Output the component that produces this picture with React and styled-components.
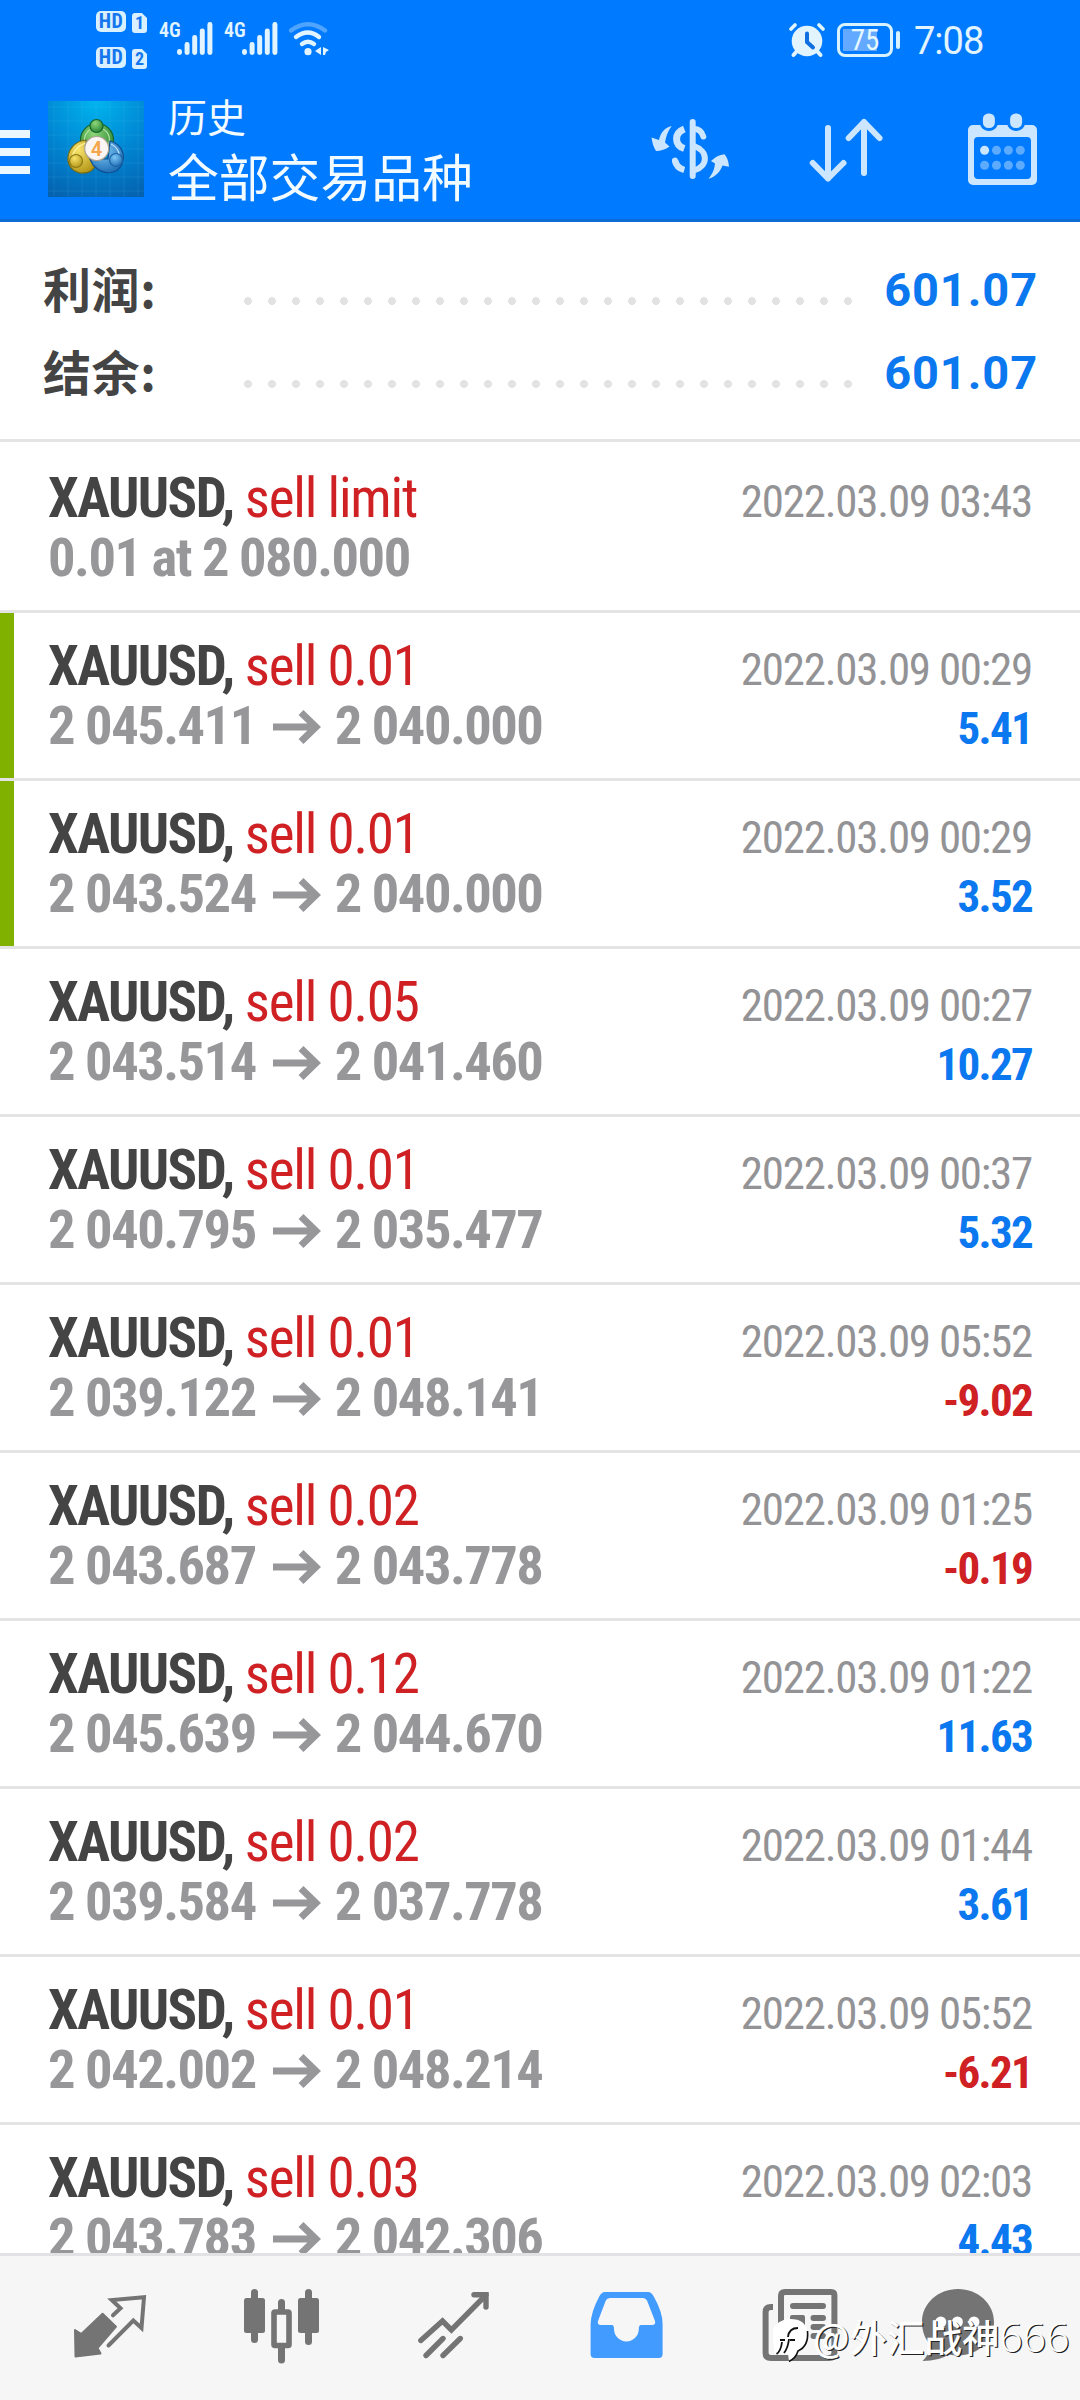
import React from "react";
import styled, { createGlobalStyle } from "styled-components";

const GlobalStyle = createGlobalStyle`
  * {
    box-sizing: border-box;
  }
  body {
    margin: 0;
    background: #fff;
    font-family: "Roboto Condensed", Roboto, "Noto Sans CJK SC", sans-serif;
  }
`;

const Screen = styled.div`
  display: flex;
  flex-direction: column;
  position: relative;
  width: 1080px;
  height: 2400px;
  overflow: hidden;
  background: #fff;
`;

const StatusBar = styled.div`
  display: flex;
  justify-content: space-between;
  height: 82px;
  padding: 11px 96px 0 96px;
  background: #007aff;
  color: #e2f4ff;
`;

const StatusGroup = styled.div`
  display: flex;
  align-items: flex-start;
  padding-top: ${(p) => p.$top || 0}px;
`;

const SimList = styled.div`
  display: flex;
  flex-direction: column;
  gap: 15px;
  margin-right: 12px;
`;

const Sim = styled.div`
  display: flex;
  gap: 6px;
  height: 21px;
  color: #1576ee;
  font-weight: 700;
  line-height: 21px;
  text-align: center;
`;

const HdBadge = styled.span`
  width: 30px;
  border-radius: 5px;
  background: #d8f0ff;
  font-size: 20px;
  letter-spacing: 0.5px;
`;

const SimBadge = styled.span`
  width: 15px;
  height: 20px;
  margin-top: 2px;
  border-radius: 3px;
  background: #d8f0ff;
  clip-path: polygon(0 0, 66% 0, 100% 25%, 100% 100%, 0 100%);
  font-size: 18px;
  line-height: 20px;
`;

const Network = styled.span`
  width: 18px;
  margin-top: 10px;
  font-size: 20px;
  font-weight: 600;
  line-height: 18px;
`;

const SignalIcon = styled.svg`
  width: 36px;
  height: 34px;
  margin: 11px 11px 0 0;
`;

const WifiIcon = styled.svg`
  width: 42px;
  height: 34px;
  margin-top: 11px;
`;

const AlarmIcon = styled.svg`
  width: 36px;
  height: 36px;
  margin-right: 12px;
`;

const Battery = styled.div`
  width: 56px;
  height: 34px;
  margin-top: 1px;
  padding: 4px;
  border: 3px solid #d8f3ff;
  border-radius: 8px;
  background: linear-gradient(#62a9ff, #62a9ff) 3px 3px / 34px 22px no-repeat;
  color: #e6f8ff;
  font-size: 29px;
  line-height: 20px;
  text-align: center;
`;

const BatteryTip = styled.div`
  width: 4px;
  height: 18px;
  margin: 9px 14px 0 3px;
  border-radius: 2px;
  background: #d8f3ff;
`;

const Clock = styled.div`
  width: 70px;
  font-family: Roboto, sans-serif;
  font-size: 38px;
  letter-spacing: -1px;
  line-height: 38px;
  white-space: nowrap;
`;

const AppBar = styled.header`
  display: flex;
  align-items: center;
  height: 140px;
  padding: 0 36px 4px 0;
  border-bottom: 3px solid #0f6bd6;
  background: #007aff;
`;

const MenuButton = styled.div`
  display: flex;
  flex-direction: column;
  gap: 10px;
  width: 30px;
  margin: 6px 18px 0 0;

  span {
    height: 8px;
    background: #ebf7ff;
  }
`;

const LogoIcon = styled.svg`
  width: 96px;
  height: 96px;
`;

const Titles = styled.div`
  flex: 1;
  margin: -4px 0 0 24px;
  color: #f2fbff;
  font-family: "Noto Sans CJK SC", sans-serif;
`;

const Title = styled.div`
  font-size: 39px;
  line-height: 57px;
`;

const Subtitle = styled.div`
  font-size: 50.8px;
  line-height: 62px;
`;

const Actions = styled.div`
  display: flex;
  gap: 72px;
`;

const ActionIcon = styled.svg`
  width: 84px;
  height: 80px;
  color: #cde6ff;
`;

const Summary = styled.section`
  height: 220px;
  padding: 27px 42px 0 43px;
  border-bottom: 3px solid #e4e4e4;
`;

const SummaryRow = styled.div`
  display: flex;
  align-items: center;
  height: 83px;
`;

const SummaryLabel = styled.span`
  width: 193px;
  margin-top: -8px;
  color: #444;
  font-family: "Noto Sans CJK SC", sans-serif;
  font-size: 48px;
  font-weight: 700;
  letter-spacing: 0.6px;
`;

const Leader = styled.span`
  width: 624px;
  height: 8px;
  margin-top: 20px;
  background: radial-gradient(circle at center, #e2e2e2 3.6px, transparent 4.2px)
    0 0 / 24px 8px repeat-x;
`;

const SummaryValue = styled.span`
  flex: 1;
  margin-top: -3px;
  color: #0b78f0;
  font-family: Roboto, sans-serif;
  font-size: 47px;
  font-weight: 700;
  letter-spacing: 0.9px;
  text-align: right;
`;

const List = styled.main`
  flex: 1;
  min-height: 0;
  padding-top: 3px;
  overflow: hidden;
`;

const Row = styled.div`
  display: flex;
  height: 168px;
  border-bottom: 3px solid #e4e4e4;
`;

const Marker = styled.div`
  width: 14px;
  background: ${(p) => (p.$active ? "#80b000" : "transparent")};
`;

const RowBody = styled.div`
  flex: 1;
  padding: 24px 48px 0 34px;
`;

const Line = styled.div`
  display: flex;
  align-items: baseline;
  justify-content: space-between;
  height: 59px;
  line-height: 59px;
  white-space: nowrap;
`;

const Symbol = styled.span`
  color: #444;
  font-size: 55px;
  font-weight: 700;
  letter-spacing: -1.6px;
`;

const Order = styled.span`
  color: #cf2024;
  font-size: 55px;
  letter-spacing: -1.2px;
`;

const Price = styled.span`
  color: #97979a;
  font-size: 54.5px;
  font-weight: 700;
  letter-spacing: -1.5px;
`;

const ArrowIcon = styled.svg`
  width: 48px;
  height: 34px;
  margin: 0 14px 0 17px;
`;

const Date = styled.span`
  color: #939396;
  font-size: 45px;
  letter-spacing: -1.25px;
`;

const Profit = styled.span`
  color: ${(p) => (p.$loss ? "#cf2024" : "#0b78f0")};
  font-size: 45px;
  font-weight: 700;
  letter-spacing: -1.7px;
`;

const NavBar = styled.nav`
  display: flex;
  height: 147px;
  padding: 24px 0 0 60px;
  border-top: 3px solid #e2e2e4;
  background: #f6f6f6;
  color: #747474;
`;

const NavIcon = styled.svg`
  width: 100px;
  height: 100px;
  margin-right: 72px;
  flex: none;
  color: ${(p) => (p.$active ? "#429bff" : "inherit")};
`;

const Watermark = styled.div`
  display: flex;
  align-items: center;
  position: absolute;
  left: 772px;
  top: 2309px;
  height: 54px;
  color: #fff;
  font-family: "Noto Sans CJK SC", sans-serif;
  font-size: 37.5px;
  font-weight: 500;
  line-height: 54px;
  text-shadow: 1.2px 1.2px 0.5px #222;
  white-space: nowrap;

  svg {
    width: 40px;
    height: 46px;
    margin: 9px 1px 0 0;
  }
`;

const WatermarkDigits = styled.span`
  font-family: "Open Sans", sans-serif;
  font-size: 41px;
  font-weight: 300;
`;

const trades = [
  { order: "sell limit", at: "0.01 at 2 080.000", date: "2022.03.09 03:43" },
  { order: "sell 0.01", from: "2 045.411", to: "2 040.000", date: "2022.03.09 00:29", profit: "5.41", marked: true },
  { order: "sell 0.01", from: "2 043.524", to: "2 040.000", date: "2022.03.09 00:29", profit: "3.52", marked: true },
  { order: "sell 0.05", from: "2 043.514", to: "2 041.460", date: "2022.03.09 00:27", profit: "10.27" },
  { order: "sell 0.01", from: "2 040.795", to: "2 035.477", date: "2022.03.09 00:37", profit: "5.32" },
  { order: "sell 0.01", from: "2 039.122", to: "2 048.141", date: "2022.03.09 05:52", profit: "-9.02" },
  { order: "sell 0.02", from: "2 043.687", to: "2 043.778", date: "2022.03.09 01:25", profit: "-0.19" },
  { order: "sell 0.12", from: "2 045.639", to: "2 044.670", date: "2022.03.09 01:22", profit: "11.63" },
  { order: "sell 0.02", from: "2 039.584", to: "2 037.778", date: "2022.03.09 01:44", profit: "3.61" },
  { order: "sell 0.01", from: "2 042.002", to: "2 048.214", date: "2022.03.09 05:52", profit: "-6.21" },
  { order: "sell 0.03", from: "2 043.783", to: "2 042.306", date: "2022.03.09 02:03", profit: "4.43" },
];

function Signal() {
  return (
    <>
      <Network>4G</Network>
      <SignalIcon viewBox="0 0 36 34" fill="currentColor">
        {[27, 20, 13, 6.5, 0].map((y, i) => (
          <rect key={y} x={i * 7.6} y={y} width="5" height={33 - y} rx="2.4" />
        ))}
      </SignalIcon>
    </>
  );
}

function Wifi() {
  return (
    <WifiIcon viewBox="0 0 42 34" fill="none" stroke="currentColor" strokeWidth="4.4" strokeLinecap="round">
      <path d="M2 8.5 Q19 -4 36 8.5" opacity="0.35" />
      <path d="M7 15 Q19 6 30 15" />
      <path d="M13 22 Q19 17.5 25 22" />
      <circle cx="19" cy="29.7" r="3.6" fill="currentColor" stroke="none" />
      <path d="M32 25 V33 L26 29 Z M34 25 L40 28 L37 30 L36 33 H34 Z" fill="currentColor" stroke="none" />
    </WifiIcon>
  );
}

function Alarm() {
  return (
    <AlarmIcon viewBox="0 0 36 36" fill="none" stroke="currentColor" strokeLinecap="round">
      <circle cx="18" cy="19" r="15.3" fill="currentColor" stroke="none" />
      <path d="M2 7 L6 3 M34 7 L30 3" strokeWidth="3.6" />
      <path d="M8 29 L4.5 33 M28 29 L31.5 33" strokeWidth="4" />
      <path d="M18 11.5 V20 L24 25.5" stroke="#0f6fe0" strokeWidth="4" />
    </AlarmIcon>
  );
}

function Logo() {
  const lines = [6, 20, 34, 48, 62, 76, 90];
  return (
    <LogoIcon viewBox="0 0 96 96">
      <defs>
        <radialGradient id="sky" cx="0.5" cy="0" r="1.1">
          <stop offset="0" stopColor="#00b4ee" />
          <stop offset="0.5" stopColor="#0088d4" />
          <stop offset="1" stopColor="#0560ae" />
        </radialGradient>
        <radialGradient id="green" cx="0.4" cy="0.3" r="0.8">
          <stop offset="0" stopColor="#8fd67a" />
          <stop offset="1" stopColor="#1d7d2c" />
        </radialGradient>
        <radialGradient id="gold" cx="0.4" cy="0.3" r="0.8">
          <stop offset="0" stopColor="#f8e36a" />
          <stop offset="1" stopColor="#ad8f10" />
        </radialGradient>
        <radialGradient id="blue" cx="0.4" cy="0.3" r="0.8">
          <stop offset="0" stopColor="#7cc6f5" />
          <stop offset="1" stopColor="#1565ae" />
        </radialGradient>
      </defs>
      <rect width="96" height="96" fill="url(#sky)" />
      <g stroke="#5cc4f4" strokeOpacity="0.14">
        {lines.map((n) => (
          <path key={n} d={`M${n} 0 V96 M0 ${n} H96`} />
        ))}
      </g>
      <g strokeWidth="1.2">
        <circle cx="49" cy="39" r="16.5" fill="url(#green)" stroke="#15652c" />
        <circle cx="49" cy="39" r="12.5" fill="none" stroke="#b4e3a4" />
        <path d="M38 39 C26 40 19 50 20 60 C22 71 34 75 43 70 L47 66 L38 52 Z" fill="url(#gold)" stroke="#6e6a18" />
        <path d="M38 42 C29 45 24 52 24 58" fill="none" stroke="#fff5a0" />
        <path d="M62 40 C73 43 78 53 74 63 C69 74 55 75 45 64 L42 58 L60 58 Z" fill="url(#blue)" stroke="#0f4f92" />
        <path d="M63 43 C71 47 73 55 70 61" fill="none" stroke="#c1e6ff" />
        <circle cx="48.5" cy="25" r="6.5" fill="url(#green)" stroke="#15652c" />
        <circle cx="28" cy="60" r="6.5" fill="url(#gold)" stroke="#8c7a14" />
        <circle cx="68" cy="59" r="6.5" fill="url(#blue)" stroke="#1d63a6" />
        <circle cx="48.7" cy="47.5" r="12" fill="#fbf6f3" stroke="#a9a294" />
      </g>
      <text x="48.5" y="54.5" textAnchor="middle" fontFamily="Roboto, sans-serif" fontSize="20" fontWeight="600" fill="#f5a54a">
        4
      </text>
    </LogoIcon>
  );
}

function CurrencyIcon() {
  return (
    <ActionIcon viewBox="0 0 84 80" fill="none" stroke="currentColor" strokeWidth="6">
      <path d="M44.7 13 V67" strokeLinecap="round" />
      <path d="M36.3 20 C26 24 26 36 36.3 39.5" strokeWidth="7" />
      <path d="M27 51.5 C28 56.5 31 59.5 36.3 61" strokeWidth="6.4" />
      <path d="M27 51.5 L27.3 52.5" strokeLinecap="round" />
      <path d="M46 20 C51 20 54 23 55.3 27.5" strokeLinecap="round" />
      <path d="M46 37 C60.5 42 60.5 57 46 61.5" />
      <path
        d="M23.7 17 C17 18.7 12.7 23 11 31 L3.5 28.5 Q4.5 36.5 8 42 Q15.5 42 21.5 37.6 L17 33.5 C18 27 20 22 23.7 17 Z"
        fill="currentColor"
        stroke="none"
      />
      <path
        d="M60.5 69.7 C66 63 66.5 58.5 67 54.5 L63 52 Q69 46 76.5 45.2 Q80.5 50 81 57.7 L74.5 56.5 C72 63.5 67 68 60.5 69.7 Z"
        fill="currentColor"
        stroke="none"
      />
    </ActionIcon>
  );
}

function SortIcon() {
  return (
    <ActionIcon viewBox="0 0 84 80" fill="none" stroke="currentColor" strokeWidth="6" strokeLinecap="round" strokeLinejoin="round">
      <path d="M24 19 V69.5 M8.8 54 L24 69.5 L39.5 54" />
      <path d="M60 64 V13 M44.7 29 L60 13 L75.5 29" />
    </ActionIcon>
  );
}

function CalendarIcon() {
  return (
    <ActionIcon viewBox="0 0 84 80" fill="currentColor">
      <path
        fillRule="evenodd"
        d="M13 16 H72 a5 5 0 0 1 5 5 V71 a5 5 0 0 1 -5 5 H13 a5 5 0 0 1 -5 -5 V21 a5 5 0 0 1 5 -5 Z M18 28 a4 4 0 0 0 -4 4 V66 a4 4 0 0 0 4 4 H67 a4 4 0 0 0 4 -4 V32 a4 4 0 0 0 -4 -4 Z"
      />
      <rect x="21.4" y="3" width="15" height="17.5" rx="7" stroke="#007aff" strokeWidth="3" />
      <rect x="48.6" y="3" width="15" height="17.5" rx="7" stroke="#007aff" strokeWidth="3" />
      {[41.3, 56.3].map((y) =>
        [24.6, 36.5, 48.4, 60.3].map((x) => (
          <circle key={x + y} cx={x} cy={y} r="4.5" opacity={x < 30 && y < 50 ? 1 : 0.45} />
        ))
      )}
    </ActionIcon>
  );
}

function BottomNav() {
  return (
    <NavBar>
      <NavIcon viewBox="0 0 100 100" fill="currentColor">
        <path
          d="M15 50 L21.3 54 L42.6 33.7 L56 46.7 L37.5 68 L40.5 73.5 L15.5 76.5 Z"
          stroke="currentColor"
          strokeWidth="2"
          strokeLinejoin="round"
        />
        <path
          d="M53 35.3 L60.5 28.3 L51.8 20 L84 17.3 L81.5 48 L73.3 40.5 L48.5 65.5"
          fill="none"
          stroke="currentColor"
          strokeWidth="4"
          strokeLinecap="round"
        />
      </NavIcon>
      <NavIcon viewBox="0 0 100 100" fill="currentColor">
        <rect x="19" y="9" width="7" height="54" rx="3.5" />
        <rect x="12" y="18" width="21" height="35" rx="2.5" />
        <rect x="46" y="19" width="7" height="15" rx="3.5" />
        <rect x="46" y="64" width="7" height="19.5" rx="3.5" />
        <rect x="42" y="32" width="15" height="33.5" rx="1" fill="none" stroke="currentColor" strokeWidth="5.6" />
        <rect x="73" y="9" width="7" height="56" rx="3.5" />
        <rect x="66" y="18" width="21" height="35" rx="2.5" />
      </NavIcon>
      <NavIcon viewBox="0 0 100 100" fill="none" stroke="currentColor" strokeWidth="5.4" strokeLinecap="round">
        <path d="M16.8 60.5 L38.5 41 L47.4 50 L82 15" />
        <path d="M70 14.7 H82 V27" />
        <path d="M22 75.5 L39 58.5 M39 75.5 L56.3 58.5" />
      </NavIcon>
      <NavIcon $active viewBox="0 0 100 100" fill="currentColor">
        <path
          fillRule="evenodd"
          d="M29 12 H72 Q75.5 12 78 17 Q86.6 32 86.6 44 V74 Q86.6 78 82.6 78 H18.6 Q14.6 78 14.6 74 V44 Q15 32 23 17 Q25.5 12 29 12 Z M34 18 Q31 18 29.8 20.5 L22 41 Q21 45 25 45 H36 Q38 45 38 49 A12.4 12.4 0 0 0 62.8 49 Q62.8 45 65 45 H76 Q80 45 79 41 L71 20.5 Q69.8 18 67 18 Z"
        />
      </NavIcon>
      <NavIcon viewBox="0 0 100 100" fill="none" stroke="currentColor" strokeWidth="6">
        <path d="M25 27 H23 Q17.6 27 17.6 32 V73 Q17.6 78 23 78 H81 Q86.4 78 86.4 73 V15 Q86.4 12 83 12 H37 Q33 12 33 16 V70" />
        <path d="M45 26 H75 M65.5 38 H75 M65.5 47 H75 M65.5 56 H75" strokeLinecap="round" />
        <rect x="42" y="35" width="15" height="15" rx="2" fill="currentColor" stroke="none" />
      </NavIcon>
      <NavIcon viewBox="0 0 100 100">
        <path
          d="M38 9 C58 9 74 23.5 74 42 C74 60.5 58 75.5 38 75.5 C35 75.5 32 75.2 29 74.5 Q19 81 2.5 81 Q9 75 10.5 65 C5 59 2 51 2 42 C2 23.5 18 9 38 9 Z"
          fill="currentColor"
        />
        {[20.8, 37.4, 54].map((x) => (
          <circle key={x} cx={x} cy="42" r="5.5" fill="#fff" />
        ))}
      </NavIcon>
    </NavBar>
  );
}

function App() {
  return (
    <Screen>
      <GlobalStyle />
      <StatusBar>
        <StatusGroup>
          <SimList>
            {[1, 2].map((n) => (
              <Sim key={n}>
                <HdBadge>HD</HdBadge>
                <SimBadge>{n}</SimBadge>
              </Sim>
            ))}
          </SimList>
          <Signal />
          <Signal />
          <Wifi />
        </StatusGroup>
        <StatusGroup $top={11}>
          <Alarm />
          <Battery>75</Battery>
          <BatteryTip />
          <Clock>7:08</Clock>
        </StatusGroup>
      </StatusBar>

      <AppBar>
        <MenuButton>
          <span />
          <span />
          <span />
        </MenuButton>
        <Logo />
        <Titles>
          <Title>历史</Title>
          <Subtitle>全部交易品种</Subtitle>
        </Titles>
        <Actions>
          <CurrencyIcon />
          <SortIcon />
          <CalendarIcon />
        </Actions>
      </AppBar>

      <Summary>
        {["利润:", "结余:"].map((label) => (
          <SummaryRow key={label}>
            <SummaryLabel>{label}</SummaryLabel>
            <Leader />
            <SummaryValue>601.07</SummaryValue>
          </SummaryRow>
        ))}
      </Summary>

      <List>
        {trades.map((trade, i) => (
          <Row key={i}>
            <Marker $active={trade.marked} />
            <RowBody>
              <Line>
                <span>
                  <Symbol>XAUUSD, </Symbol>
                  <Order>{trade.order}</Order>
                </span>
                <Date>{trade.date}</Date>
              </Line>
              <Line>
                {trade.at ? (
                  <Price>{trade.at}</Price>
                ) : (
                  <Price>
                    {trade.from}
                    <ArrowIcon viewBox="0 0 48 34" fill="none" stroke="currentColor" strokeWidth="7">
                      <path d="M0 17 H43 M28 2.5 L43 17 L28 31.5" />
                    </ArrowIcon>
                    {trade.to}
                  </Price>
                )}
                {trade.profit && (
                  <Profit $loss={trade.profit.startsWith("-")}>{trade.profit}</Profit>
                )}
              </Line>
            </RowBody>
          </Row>
        ))}
      </List>

      <BottomNav />

      <Watermark>
        <svg viewBox="0 0 40 46">
          <path d="M1 12 Q4 2 18 1 Q34 1 35 14 Q35 28 26 33 Q23 40 17 43 L16 36 H3 Q1 30 1 12 Z" fill="#fff" />
          <path
            d="M4.5 36 Q9 33 10 24 M8 22 H13 M26 10 Q17 10 16 19 M17 21 Q16 30 12 35 M18 22 H23"
            fill="none"
            stroke="#111"
            strokeWidth="1.8"
          />
          <path d="M35.5 13 Q37 28 26 33 Q24 40 17 43.5" fill="none" stroke="#111" strokeWidth="1.6" />
        </svg>
        @外汇战神
        <WatermarkDigits>666</WatermarkDigits>
      </Watermark>
    </Screen>
  );
}

export default App;
